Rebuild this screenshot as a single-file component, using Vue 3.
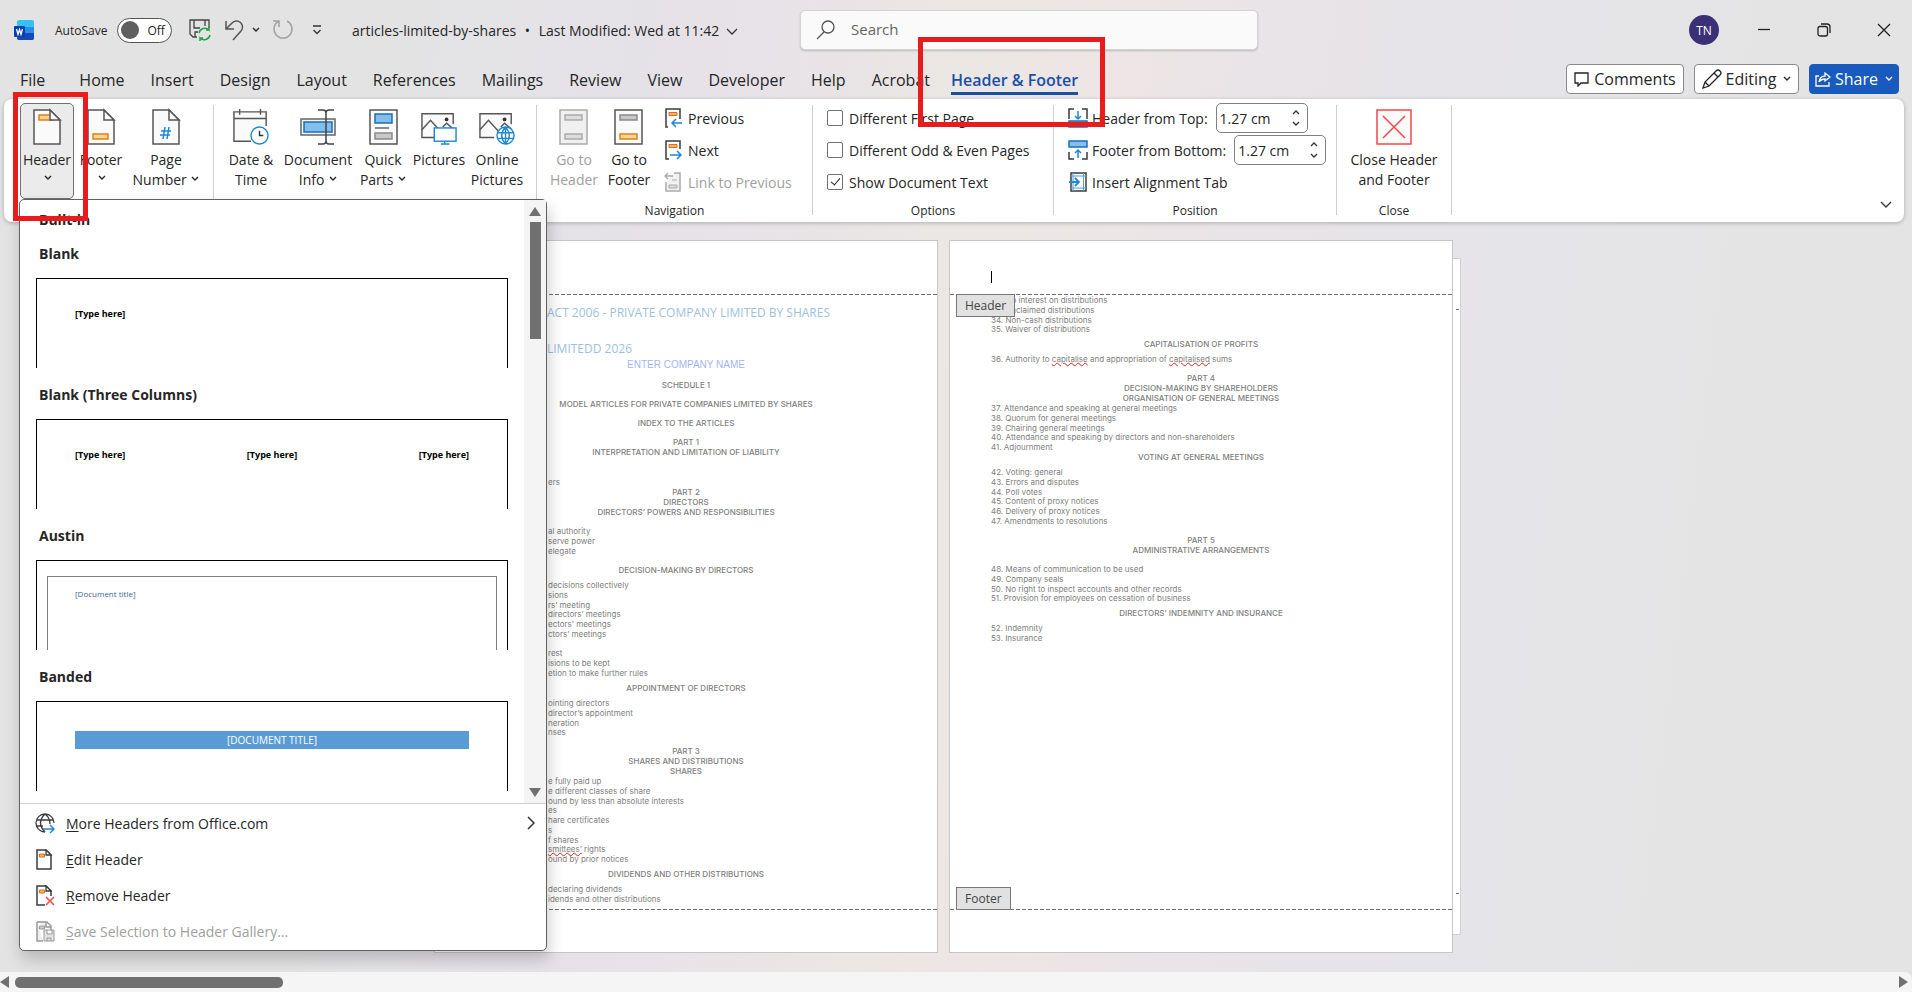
<template>
  <div class="word">
    <header class="title-bar">
      <Icon class="logo" name="word" />
      <label class="autosave">
        AutoSave
        <input v-model="autoSave" type="checkbox" class="sr-only" />
        <span class="toggle"><span class="knob"></span>Off</span>
      </label>
      <div class="quick-access">
        <button aria-label="Save"><Icon name="save" /></button>
        <button class="undo" aria-label="Undo"><Icon name="undo" /><Icon name="chevron" /></button>
        <button aria-label="Redo"><Icon name="redo" /></button>
        <button class="customize" aria-label="Customize"><Icon name="customize" /></button>
      </div>
      <button class="doc-name">
        articles-limited-by-shares <span class="dot">•</span> Last Modified: Wed at 11:42
        <Icon name="chevronBig" />
      </button>
      <label class="search">
        <Icon name="search" />
        <input type="search" placeholder="Search" aria-label="Search" />
      </label>
      <div class="window-controls">
        <button class="avatar">TN</button>
        <button aria-label="Minimize"><Icon name="minimize" /></button>
        <button aria-label="Restore"><Icon name="restore" /></button>
        <button aria-label="Close"><Icon name="close" /></button>
      </div>
    </header>

    <nav class="tabs">
      <button v-for="tab in tabs" :key="tab" class="tab">{{ tab }}</button>
      <button class="tab active">Header &amp; Footer<span class="highlight highlight-tab"></span></button>
      <div class="actions">
        <button class="action"><Icon name="comment" />Comments</button>
        <button class="action editing"><Icon name="pencil" />Editing<Icon name="chevron" /></button>
        <button class="action share"><Icon name="share" />Share<Icon name="chevron" /></button>
      </div>
    </nav>

    <section class="ribbon">
      <div class="group group-insert">
        <div class="tools">
          <div class="header-tool">
            <button class="tool pressed">
              <Icon name="header" />
              <span>Header</span>
              <span class="drop"><Icon name="chevron" /></span>
            </button>
            <div class="menu">
              <div class="gallery">
                <div class="gallery-list">
                  <h2>Built-in</h2>
                  <template v-for="item in gallery" :key="item.name">
                    <h3>{{ item.name }}</h3>
                    <button class="preview" :class="item.kind">
                      <span class="preview-inner">
                        <span v-for="(text, i) in item.texts" :key="i">{{ text }}</span>
                      </span>
                    </button>
                  </template>
                </div>
                <div class="scroll-y">
                  <Icon name="arrowUp" />
                  <span class="thumb-y"></span>
                  <Icon name="arrowDown" />
                </div>
              </div>
              <ul class="menu-items">
                <li v-for="item in menuItems" :key="item.icon">
                  <button :disabled="item.disabled">
                    <Icon :name="item.icon" />
                    <span><u>{{ item.key }}</u>{{ item.label }}</span>
                    <Icon v-if="item.more" class="more" name="chevronRight" />
                  </button>
                </li>
              </ul>
            </div>
            <span class="highlight highlight-header"></span>
          </div>
          <button class="tool w-54">
            <Icon name="footer" />
            <span>Footer</span>
            <span class="drop"><Icon name="chevron" /></span>
          </button>
          <button class="tool w-76">
            <Icon name="pageNumber" />
            <span>Page</span>
            <span>Number <Icon name="chevron" /></span>
          </button>
        </div>
      </div>
      <i class="sep"></i>

      <div class="group group-content">
        <div class="tools">
          <button class="tool w-60"><Icon name="date" /><span>Date &amp;</span><span>Time</span></button>
          <button class="tool w-74">
            <Icon name="docInfo" />
            <span>Document</span>
            <span>Info <Icon name="chevron" /></span>
          </button>
          <button class="tool w-56">
            <Icon name="quickParts" />
            <span>Quick</span>
            <span>Parts <Icon name="chevron" /></span>
          </button>
          <button class="tool w-56"><Icon name="pictures" /><span>Pictures</span></button>
          <button class="tool w-60"><Icon name="onlinePictures" /><span>Online</span><span>Pictures</span></button>
        </div>
      </div>
      <i class="sep"></i>

      <div class="group group-navigation">
        <div class="tools">
          <button class="tool w-56" disabled><Icon name="goHeader" /><span>Go to</span><span>Header</span></button>
          <button class="tool w-54"><Icon name="goFooter" /><span>Go to</span><span>Footer</span></button>
          <div class="rows">
            <button class="row"><Icon name="previous" />Previous</button>
            <button class="row"><Icon name="next" />Next</button>
            <button class="row" disabled><Icon name="link" />Link to Previous</button>
          </div>
        </div>
        <p class="caption">Navigation</p>
      </div>
      <i class="sep"></i>

      <div class="group group-options">
        <div class="rows">
          <label v-for="option in options" :key="option.label" class="row">
            <input v-model="option.checked" type="checkbox" />{{ option.label }}
          </label>
        </div>
        <p class="caption">Options</p>
      </div>
      <i class="sep"></i>

      <div class="group group-position">
        <div class="rows">
          <div v-for="field in distances" :key="field.id" class="row">
            <Icon :name="field.icon" />
            <label :for="field.id">{{ field.label }}</label>
            <span class="spin">
              <input :id="field.id" v-model="field.value" type="text" />
              <span class="spin-buttons">
                <button aria-label="Increase"><Icon name="spinUp" /></button>
                <button aria-label="Decrease"><Icon name="spinDown" /></button>
              </span>
            </span>
          </div>
          <button class="row"><Icon name="alignTab" />Insert Alignment Tab</button>
        </div>
        <p class="caption">Position</p>
      </div>
      <i class="sep"></i>

      <div class="group group-close">
        <button class="tool"><Icon name="closeHeader" /><span>Close Header</span><span>and Footer</span></button>
        <p class="caption">Close</p>
      </div>
      <i class="sep"></i>
      <button class="collapse" aria-label="Collapse ribbon"><Icon name="chevronBig" /></button>
    </section>

    <main class="workspace">
      <article class="page">
        <div class="page-header"></div>
        <div class="page-body">
          <div class="big-title">
            <p>ACT 2006 - PRIVATE COMPANY LIMITED BY SHARES</p>
            <p>LIMITEDD 2026</p>
          </div>
          <p class="company">ENTER COMPANY NAME</p>
          <div v-for="(block, i) in pageOne" :key="i" class="block" :class="[block.kind, block.gap]">
            <p v-for="(line, j) in block.lines" :key="j" v-html="line"></p>
          </div>
        </div>
        <div class="page-footer"></div>
      </article>
      <div class="page-stack">
        <div class="page-behind"></div>
        <article class="page second">
          <div class="page-header">
            <span class="caret"></span>
            <span class="tag tag-header">Header</span>
          </div>
          <div class="page-body">
            <div v-for="(block, i) in pageTwo" :key="i" class="block" :class="[block.kind, block.gap]">
              <p v-for="(line, j) in block.lines" :key="j" v-html="line"></p>
            </div>
          </div>
          <div class="page-footer"><span class="tag tag-footer">Footer</span></div>
        </article>
      </div>
    </main>

    <div class="scroll-x">
      <Icon name="arrowLeft" />
      <span class="thumb-x"></span>
      <Icon class="arrow-right" name="arrowRight" />
    </div>
  </div>
</template>

<script setup>
import { h, ref } from 'vue'

const doc = '<path d="M5 1h16l10 10v24H5z" fill="#fafafa" stroke="#555" stroke-width="1.5"/>'
const fold = '<path d="M21 1v10h10z" fill="#fff" stroke="#555" stroke-width="1.5"/>'
const orange = 'fill="#fbd58c" stroke="#e07f1c" stroke-width="1.5"'
const blue = 'fill="#83beec" stroke="#1a6fb8" stroke-width="1.5"'
const gray = 'fill="#c8c8c8" stroke="#8a8a8a" stroke-width="1.5"'
const picture = '<path d="M34 16V5H1v25h15" fill="#fafafa" stroke="#555" stroke-width="1.5"/><path d="M1 22l9-10 11 12M23 19l4-4 7 6" fill="none" stroke="#555" stroke-width="1.5"/><circle cx="27" cy="11" r="2" fill="#333"/>'
const smallDoc = '<path d="M2 1h9l5 5v14H2z" fill="#fff" stroke="#3b3b3b" stroke-width="1.5"/><path d="M4.500 5h5v3h-5z" fill="#f9b269" stroke="#d8701a"/><path d="M11 1v5h5z" fill="#fff" stroke="#3b3b3b" stroke-width="1.300"/>'

// name: [width, height, markup]
const icons = {
  word: [20, 20, '<rect x="3" width="17" height="20" rx="2" fill="#35c1f1"/><path d="M3 7h17v6H3z" fill="#2b8ceb"/><path d="M3 13h17v5a2 2 0 0 1-2 2H5a2 2 0 0 1-2-2z" fill="#1548b8"/><rect y="6" width="11" height="11" rx="1" fill="#0a3ea8"/><path d="M2.500 9l1.500 5.500 1.500-5 1.500 5L8.500 9" fill="none" stroke="#fff" stroke-width="1.300"/>'],
  save: [22, 22, '<path d="M8 18H4L1 15V1h19v8" fill="none" stroke="#444" stroke-width="1.300"/><path d="M5 1v8h6M16 1v6M6 18v-5h3" fill="none" stroke="#444" stroke-width="1.300"/><path d="M10 14a6 6 0 0 1 10-3v-3m0 3h-3M21 16a6 6 0 0 1-10 3v3m0-3h3" fill="none" stroke="#28a14a" stroke-width="1.500"/>'],
  undo: [20, 22, '<path d="M2 2v8h8M2 10l6-6a6 6 0 0 1 9 8l-8 9" fill="none" stroke="#555" stroke-width="1.500"/>'],
  redo: [22, 22, '<path d="M1 2h6v6M7 2a9 9 0 1 0 8 0" fill="none" stroke="#a3a3a3" stroke-width="1.500"/>'],
  customize: [10, 10, '<path d="M1 1h8M1.500 5L5 8.500 8.500 5" fill="none" stroke="#333" stroke-width="1.300"/>'],
  chevron: [8, 6, '<path d="M1 1l3 3 3-3" fill="none" stroke="currentColor" stroke-width="1.400"/>'],
  chevronBig: [12, 8, '<path d="M1 1l5 5 5-5" fill="none" stroke="#333" stroke-width="1.300"/>'],
  chevronRight: [8, 14, '<path d="M1 1l6 6-6 6" fill="none" stroke="#333" stroke-width="1.500"/>'],
  search: [20, 20, '<circle cx="12" cy="7" r="6" fill="none" stroke="#555" stroke-width="1.300"/><path d="M8 12l-7 7" stroke="#555" stroke-width="1.300"/>'],
  minimize: [14, 14, '<path d="M1 6.500h12" stroke="#222" stroke-width="1.300"/>'],
  restore: [14, 14, '<rect x="1" y="3.500" width="9.500" height="9.500" rx="2" fill="none" stroke="#222" stroke-width="1.300"/><path d="M4 1h6a3 3 0 0 1 3 3v6" fill="none" stroke="#222" stroke-width="1.300"/>'],
  close: [14, 14, '<path d="M1 1l12 12M13 1L1 13" stroke="#222" stroke-width="1.300"/>'],
  comment: [16, 16, '<path d="M1 2h13v10H7l-3 3v-3H1z" fill="none" stroke="#222" stroke-width="1.300"/>'],
  pencil: [20, 20, '<path d="M1 19l2-6L14 2q2-2 4 0t0 4L7 17zM12 4l4 4M3 13l4 4" fill="none" stroke="#222" stroke-width="1.300"/>'],
  share: [16, 16, '<path d="M4 5H1v10h13v-4M4 11q1-6 6-6V2l5 4-5 4V8q-4 0-6 3z" fill="none" stroke="#fff" stroke-width="1.300"/>'],
  header: [36, 36, `${doc}<rect x="10" y="6" width="14" height="5" ${orange}/>${fold}`],
  footer: [36, 36, `${doc}${fold}<rect x="10" y="25" width="15" height="5" ${orange}/>`],
  pageNumber: [36, 36, `${doc}${fold}<path d="M17 18l-2 12M21 18l-2 12M13 22h10M12 26h10" fill="none" stroke="#1e88d2" stroke-width="1.500"/>`],
  date: [38, 38, '<path d="M35 18V3H1v31h18" fill="#fafafa" stroke="#555" stroke-width="1.500"/><path d="M1 10h34M7 0v6M29 0v6" stroke="#555" stroke-width="1.500"/><circle cx="28" cy="28" r="9" fill="#fff" stroke="#1e88d2" stroke-width="1.500"/><path d="M28 23v5h4" fill="none" stroke="#333" stroke-width="1.500"/>'],
  docInfo: [36, 36, `<rect x="1" y="10" width="34" height="16" fill="#f4f4f4" stroke="#666" stroke-width="1.500"/><rect x="4" y="13" width="28" height="10" ${blue}/><path d="M18 1h5q3 0 3 3v28q0 3-3 3h-5M34 1h-5q-3 0-3 3v28q0 3 3 3h5" fill="none" stroke="#444" stroke-width="1.500"/>`],
  quickParts: [36, 36, `<rect x="5" y="1" width="27" height="34" fill="#fafafa" stroke="#555" stroke-width="1.500"/><rect x="10" y="5" width="17" height="9" ${blue}/><path d="M10 19h14" stroke="#666" stroke-width="1.500"/><rect x="10" y="24" width="17" height="6" ${gray}/>`],
  pictures: [38, 38, `${picture}<rect x="14" y="20" width="23" height="14" fill="#fff" stroke="#1e88d2" stroke-width="1.500"/><path d="M25 34v3M21 37h9" stroke="#1e88d2" stroke-width="1.500"/>`],
  onlinePictures: [38, 38, `${picture}<circle cx="28" cy="28" r="9" fill="#fff"/><path d="M19 28a9 9 0 1 0 18 0 9 9 0 1 0-18 0M28 19v18M28 19q-8 9 0 18M28 19q8 9 0 18M20 25h16M20 31h16" fill="none" stroke="#1e88d2" stroke-width="1.500"/>`],
  goHeader: [36, 36, '<rect x="4" y="1" width="27" height="34" fill="#f0f0f0" stroke="#aaa" stroke-width="1.500"/><path d="M9 6h17v5H9zM9 25h17v5H9z" fill="#ddd" stroke="#aaa" stroke-width="1.500"/>'],
  goFooter: [36, 36, `<rect x="4" y="1" width="27" height="34" fill="#fafafa" stroke="#555" stroke-width="1.500"/><rect x="9" y="6" width="17" height="5" ${gray}/><rect x="9" y="25" width="17" height="5" ${orange}/>`],
  previous: [20, 20, '<path d="M4 19H2V1h14v10" fill="#fff" stroke="#3b3b3b" stroke-width="1.500"/><path d="M5 4.500h8v3H5z" fill="#f9b269" stroke="#d8701a"/><path d="M18 15H8m4-4l-4 4 4 4" fill="none" stroke="#1e88d2" stroke-width="1.500"/>'],
  next: [20, 20, '<path d="M5 19H2V1h14v8" fill="#fff" stroke="#3b3b3b" stroke-width="1.500"/><path d="M5 4.500h8v3H5z" fill="#f9b269" stroke="#d8701a"/><path d="M6 15h11m-4-4l4 4-4 4" fill="none" stroke="#1e88d2" stroke-width="1.500"/>'],
  link: [20, 20, '<path d="M10 1h6v18H2v-9" fill="#f2f2f2" stroke="#aaa" stroke-width="1.500"/><path d="M5 13h8v3H5zM8 8h5" fill="#ddd" stroke="#aaa"/><path d="M9 4H1m3-3L1 4l3 3" fill="none" stroke="#aaa" stroke-width="1.300"/>'],
  fromTop: [20, 20, `<path d="M1 11V1h5M14 1h5v10" fill="none" stroke="#3b3b3b" stroke-width="1.500"/><path d="M10 3v8m-3-3l3 3 3-3" fill="none" stroke="#1e88d2" stroke-width="1.500"/><rect x="1" y="13" width="18" height="6" ${blue}/>`],
  fromBottom: [20, 20, `<path d="M1 12v7h5M14 19h5v-7" fill="none" stroke="#3b3b3b" stroke-width="1.500"/><path d="M10 18v-8m-3 3l3-3 3 3" fill="none" stroke="#1e88d2" stroke-width="1.500"/><rect x="1" y="1" width="18" height="6" ${blue}/>`],
  alignTab: [20, 20, '<rect x="3" y="1" width="15" height="18" fill="#fff" stroke="#3b3b3b" stroke-width="1.500"/><path d="M5 1v18M15.500 1v18M3 4h15M3 16h15" stroke="#4aa0dc"/><path d="M1 10h10m-4-4l4 4-4 4" fill="none" stroke="#1e88d2" stroke-width="1.800"/>'],
  spinUp: [8, 6, '<path d="M1 5l3-3 3 3" fill="none" stroke="#333" stroke-width="1.300"/>'],
  spinDown: [8, 6, '<path d="M1 1l3 3 3-3" fill="none" stroke="#333" stroke-width="1.300"/>'],
  closeHeader: [36, 36, '<rect x="1" y="1" width="34" height="34" fill="#fafafa" stroke="#f04848" stroke-width="1.500"/><path d="M7 7l22 22M29 7L7 29" stroke="#f04848" stroke-width="1.500"/>'],
  office: [20, 21, '<path d="M19 10A9 9 0 1 0 10 19M10 1q-9 9 0 18M10 1q5 4 5 10M2 7h16M2 13h6" fill="none" stroke="#3b3b3b" stroke-width="1.300"/><path d="M8 16h11m-4-4l4 4-4 4" fill="none" stroke="#1e88d2" stroke-width="1.500"/>'],
  edit: [20, 21, smallDoc],
  remove: [20, 21, `${smallDoc}<path d="M10 11h10v10H10z" fill="#fff"/><path d="M11 12l8 8M19 12l-8 8" stroke="#f04848" stroke-width="1.500"/>`],
  saveSelection: [20, 21, '<path d="M2 1h10l4 4v4M2 1v19h6M11 1v5h5" fill="#eee" stroke="#999" stroke-width="1.500"/><path d="M4.500 5h5v3h-5z" fill="#ccc" stroke="#999"/><path d="M9 9h10v11H9zM12 9v4h5V9M12 20v-3h4v3" fill="#e4e4e4" stroke="#999"/>'],
  arrowUp: [12, 10, '<path d="M6 0l6 9H0z" fill="#707070"/>'],
  arrowDown: [12, 10, '<path d="M6 10L0 1h12z" fill="#707070"/>'],
  arrowLeft: [10, 12, '<path d="M0 6l9-6v12z" fill="#707070"/>'],
  arrowRight: [10, 12, '<path d="M10 6L1 0v12z" fill="#707070"/>']
}

const Icon = ({ name }) => {
  const [width, height, markup] = icons[name]
  return h('svg', {
    width,
    height,
    viewBox: `0 0 ${width} ${height}`,
    'aria-hidden': 'true',
    innerHTML: markup
  })
}

const autoSave = ref(false)

const tabs = ['File', 'Home', 'Insert', 'Design', 'Layout', 'References', 'Mailings', 'Review', 'View', 'Developer', 'Help', 'Acrobat']

const gallery = [
  { name: 'Blank', kind: 'blank', texts: ['[Type here]'] },
  { name: 'Blank (Three Columns)', kind: 'columns', texts: ['[Type here]', '[Type here]', '[Type here]'] },
  { name: 'Austin', kind: 'austin', texts: ['[Document title]'] },
  { name: 'Banded', kind: 'banded', texts: ['[DOCUMENT TITLE]'] }
]

const menuItems = [
  { icon: 'office', key: 'M', label: 'ore Headers from Office.com', more: true },
  { icon: 'edit', key: 'E', label: 'dit Header' },
  { icon: 'remove', key: 'R', label: 'emove Header' },
  { icon: 'saveSelection', key: 'S', label: 'ave Selection to Header Gallery...', disabled: true }
]

const options = ref([
  { label: 'Different First Page', checked: false },
  { label: 'Different Odd & Even Pages', checked: false },
  { label: 'Show Document Text', checked: true }
])

const distances = ref([
  { id: 'from-top', icon: 'fromTop', label: 'Header from Top:', value: '1.27 cm' },
  { id: 'from-bottom', icon: 'fromBottom', label: 'Footer from Bottom:', value: '1.27 cm' }
])

const pageOne = [
  { kind: 'heading', gap: 'gap-md', lines: ['SCHEDULE 1'] },
  { kind: 'heading', gap: 'gap-md', lines: ['MODEL ARTICLES FOR PRIVATE COMPANIES LIMITED BY SHARES'] },
  { kind: 'heading', gap: 'gap-md', lines: ['INDEX TO THE ARTICLES'] },
  { kind: 'heading', gap: 'gap-md', lines: ['PART 1', 'INTERPRETATION AND LIMITATION OF LIABILITY'] },
  { kind: 'list', gap: 'gap-lg', lines: ['ers'] },
  { kind: 'heading', lines: ['PART 2', 'DIRECTORS', 'DIRECTORS’ POWERS AND RESPONSIBILITIES'] },
  { kind: 'list', gap: 'gap-md', lines: ['al authority', 'serve power', 'elegate'] },
  { kind: 'heading', gap: 'gap-md', lines: ['DECISION-MAKING BY DIRECTORS'] },
  { kind: 'list', gap: 'gap-sm', lines: ['decisions collectively', 'sions', 'rs’ meeting', 'directors’ meetings', 'ectors’ meetings', 'ctors’ meetings'] },
  { kind: 'list', gap: 'gap-md', lines: ['rest', 'isions to be kept', 'etion to make further rules'] },
  { kind: 'heading', gap: 'gap-sm', lines: ['APPOINTMENT OF DIRECTORS'] },
  { kind: 'list', gap: 'gap-sm', lines: ['ointing directors', 'director’s appointment', 'neration', 'nses'] },
  { kind: 'heading', gap: 'gap-md', lines: ['PART 3', 'SHARES AND DISTRIBUTIONS', 'SHARES'] },
  { kind: 'list', lines: ['e fully paid up', 'e different classes of share', 'ound by less than absolute interests', 'es', 'hare certificates', 's', 'f shares', '<u class="typo">smittees’</u> rights', 'ound by prior notices'] },
  { kind: 'heading', gap: 'gap-sm', lines: ['DIVIDENDS AND OTHER DISTRIBUTIONS'] },
  { kind: 'list', gap: 'gap-sm', lines: ['declaring dividends', 'idends and other distributions'] }
]

const pageTwo = [
  { kind: 'list', lines: ['32. No interest on distributions', '33. Unclaimed distributions', '34. Non-cash distributions', '35. Waiver of distributions'] },
  { kind: 'heading', gap: 'gap-sm', lines: ['CAPITALISATION OF PROFITS'] },
  { kind: 'list', gap: 'gap-sm', lines: ['36. Authority to <u class="typo">capitalise</u> and appropriation of <u class="typo">capitalised</u> sums'] },
  { kind: 'heading', gap: 'gap-md', lines: ['PART 4', 'DECISION-MAKING BY SHAREHOLDERS', 'ORGANISATION OF GENERAL MEETINGS'] },
  { kind: 'list', lines: ['37. Attendance and speaking at general meetings', '38. Quorum for general meetings', '39. Chairing general meetings', '40. Attendance and speaking by directors and non-shareholders', '41. Adjournment'] },
  { kind: 'heading', lines: ['VOTING AT GENERAL MEETINGS'] },
  { kind: 'list', gap: 'gap-sm', lines: ['42. Voting: general', '43. Errors and disputes', '44. Poll votes', '45. Content of proxy notices', '46. Delivery of proxy notices', '47. Amendments to resolutions'] },
  { kind: 'heading', gap: 'gap-md', lines: ['PART 5', 'ADMINISTRATIVE ARRANGEMENTS'] },
  { kind: 'list', gap: 'gap-md', lines: ['48. Means of communication to be used', '49. Company seals', '50. No right to inspect accounts and other records', '51. Provision for employees on cessation of business'] },
  { kind: 'heading', gap: 'gap-sm', lines: ['DIRECTORS’ INDEMNITY AND INSURANCE'] },
  { kind: 'list', gap: 'gap-sm', lines: ['52. Indemnity', '53. Insurance'] }
]
</script>

<style>
body {
  margin: 0;
}
</style>

<style scoped>
* {
  box-sizing: border-box;
}

.word {
  display: flex;
  flex-direction: column;
  min-height: 100vh;
  font-family: "Open Sans", "Noto Sans", sans-serif;
  font-size: 14px;
  color: #262626;
  background: linear-gradient(97deg, #e3e3e3 0%, #e3e3e4 20%, #e6e2e8 36%, #ebe7e4 48%, #eee5e5 54%, #e8e4e8 64%, #e5e4e8 76%, #e4e4e4 90%);
}

button {
  padding: 0;
  border: 0;
  background: none;
  color: inherit;
  font: inherit;
  white-space: nowrap;
}

svg {
  flex: none;
}

p,
h2,
h3,
ul {
  margin: 0;
  padding: 0;
}

.sr-only {
  position: absolute;
  width: 1px;
  height: 1px;
  margin: 0;
  opacity: 0;
}

/* title bar */
.title-bar {
  display: flex;
  align-items: center;
  height: 60px;
  padding: 0 21px 0 14px;
}

.autosave {
  display: flex;
  align-items: center;
  gap: 10px;
  width: 134px;
  margin-left: 21px;
  font-size: 12px;
  white-space: nowrap;
}

.toggle {
  display: flex;
  align-items: center;
  gap: 8px;
  width: 55px;
  height: 25px;
  padding-left: 3px;
  border: 1px solid #555;
  border-radius: 13px;
  background: #fff;
}

.knob {
  width: 18px;
  height: 18px;
  border-radius: 50%;
  background: #5f5f5f;
}

.quick-access {
  display: flex;
  align-items: center;
  width: 163px;
}

.quick-access button {
  display: flex;
  align-items: center;
}

.quick-access .undo {
  gap: 8px;
  margin: 0 12px 0 13px;
}

.quick-access .customize {
  margin-left: 18px;
}

.doc-name {
  width: 448px;
  text-align: left;
}

.doc-name svg {
  margin-left: 3px;
}

.dot {
  margin: 0 5px;
}

.search {
  display: flex;
  align-items: center;
  gap: 15px;
  flex: 0 1 458px;
  height: 40px;
  padding-left: 15px;
  border: 1px solid #d4d4d4;
  border-radius: 5px;
  background: #fafafa;
  box-shadow: 0 1px 2px rgba(0, 0, 0, 0.2);
}

.search input {
  flex: 1;
  min-width: 0;
  padding: 0 0 2px;
  border: 0;
  outline: 0;
  background: none;
  font: inherit;
  font-size: 15px;
}

.search input::placeholder {
  color: #666;
  opacity: 1;
}

.window-controls {
  display: flex;
  align-items: center;
  gap: 46px;
  margin-left: auto;
}

.window-controls button {
  display: flex;
}

.window-controls .avatar {
  align-items: center;
  justify-content: center;
  width: 30px;
  height: 30px;
  margin-right: -8px;
  border-radius: 50%;
  background: #3b3078;
  color: #fff;
  font-size: 12px;
}

/* tabs */
.tabs {
  display: flex;
  align-items: flex-start;
  height: 39px;
  padding: 4px 13px 0 7px;
}

.tab {
  position: relative;
  margin: 4px 13px 0;
  border-bottom: 3px solid transparent;
  font-size: 16px;
  line-height: 24px;
}

.tab:first-child {
  margin-right: 21px;
}

.tab.active {
  margin-left: 8px;
  border-color: #1850a8;
  color: #1850a8;
  font-weight: 600;
}

.highlight {
  position: absolute;
  z-index: 5;
  border: 5px solid #e81c1c;
  pointer-events: none;
}

.highlight-tab {
  top: -31px;
  left: -33px;
  width: 187px;
  height: 90px;
}

.highlight-header {
  top: -11px;
  left: -7px;
  width: 75px;
  height: 129px;
}

.actions {
  display: flex;
  gap: 10px;
  margin-left: auto;
}

.action {
  display: flex;
  align-items: center;
  justify-content: center;
  gap: 4px;
  width: 118px;
  height: 30px;
  border: 1px solid #8a8a8a;
  border-radius: 4px;
  background: #fff;
  font-size: 16px;
}

.action.editing {
  width: 105px;
}

.action.share {
  width: 90px;
  border-color: #185abd;
  background: #185abd;
  color: #fff;
}

.action svg:last-child:not(:first-child) {
  margin-left: 3px;
}

/* ribbon */
.ribbon {
  display: flex;
  margin: 0 8px 0 4px;
  padding-top: 4px;
  border-radius: 8px;
  background: #fff;
  box-shadow: 0 1px 4px rgba(0, 0, 0, 0.25);
}

.group {
  display: flex;
  flex-direction: column;
  height: 119px;
}

.group-insert {
  width: 209px;
  padding-left: 16px;
}

.group-content {
  width: 322px;
  padding-left: 7px;
}

.group-navigation {
  width: 275px;
}

.group-navigation .tools {
  padding-left: 9px;
}

.group-options {
  width: 240px;
}

.group-options .rows {
  padding-left: 14px;
}

.group-position {
  width: 282px;
}

.group-position .rows {
  padding-left: 14px;
}

.group-close {
  width: 114px;
}

.sep {
  width: 1px;
  margin: 2px 0 7px;
  background: #cfcfcf;
}

.tools {
  display: flex;
}

.caption {
  margin-top: 3px;
  font-size: 12px;
  line-height: 18px;
  text-align: center;
}

.tool {
  display: flex;
  flex-direction: column;
  align-items: center;
  height: 96px;
  padding-top: 6px;
  line-height: 20px;
}

.tool > svg {
  height: 36px;
  margin-bottom: 5px;
  overflow: visible;
}

.tool span svg {
  margin: 0 0 3px 1px;
}

.tool .drop {
  line-height: 18px;
}

.tool:disabled,
.row:disabled {
  color: #a0a0a0;
}

.tool.pressed {
  width: 54px;
  border: 1px solid #707070;
  border-radius: 5px;
  padding-top: 5px;
  background: #ebebeb;
}

.header-tool {
  position: relative;
}

.w-54 {
  width: 54px;
}

.w-56 {
  width: 56px;
}

.w-60 {
  width: 60px;
}

.w-74 {
  width: 74px;
}

.w-76 {
  width: 76px;
}

.rows {
  display: flex;
  flex-direction: column;
  height: 96px;
  margin-top: -1px;
}

.rows + .caption {
  margin-top: 4px;
}

.tools .rows {
  padding-left: 8px;
}

.row {
  display: flex;
  align-items: center;
  gap: 4px;
  height: 32px;
  white-space: nowrap;
}

.row input[type="checkbox"] {
  appearance: none;
  display: grid;
  place-items: center;
  width: 16px;
  height: 16px;
  margin: 0 2px 0 0;
  border: 1px solid #707070;
  border-radius: 2px;
  background: #fff;
}

.row input[type="checkbox"]:checked::after {
  content: "";
  width: 4px;
  height: 8px;
  margin-bottom: 3px;
  border: solid #222;
  border-width: 0 1px 1px 0;
  transform: rotate(40deg);
}

.spin {
  display: flex;
  width: 92px;
  height: 30px;
  margin-left: 4px;
  border: 1px solid #808080;
  border-radius: 5px;
  background: #fff;
}

.spin input {
  flex: 1;
  min-width: 0;
  padding: 0 0 0 3px;
  border: 0;
  outline: 0;
  background: none;
  color: inherit;
  font: inherit;
}

.spin-buttons {
  display: flex;
  flex-direction: column;
  justify-content: space-evenly;
  width: 22px;
}

.spin-buttons button {
  display: flex;
  justify-content: center;
}

.collapse {
  align-self: flex-end;
  height: 32px;
  margin: 0 12px 3px auto;
}

/* header gallery menu */
.menu {
  position: absolute;
  z-index: 4;
  top: 96px;
  left: -1px;
  width: 528px;
  border: 1px solid #5f6163;
  border-radius: 5px;
  background: #fff;
  box-shadow: 2px 8px 16px rgba(0, 0, 0, 0.2);
}

.gallery {
  display: flex;
  height: 604px;
  border-bottom: 1px solid #cfcfcf;
}

.gallery-list {
  flex: 1;
  padding: 3px 16px 12px;
}

.gallery h2,
.gallery h3 {
  padding-left: 3px;
  font-size: 14px;
  font-weight: 700;
  line-height: 34px;
}

.preview {
  display: block;
  width: 100%;
  height: 90px;
  margin: 7px 0 10px;
  border: 1px solid #000;
  border-bottom: 0;
  font-size: 9px;
  font-weight: 700;
  color: #000;
}

.preview-inner {
  display: flex;
  justify-content: space-between;
  height: 100%;
  padding: 28px 38px 0;
}

.austin {
  padding: 15px 10px 0;
}

.austin .preview-inner {
  padding: 11px 27px 0;
  border: 1px solid #808080;
  border-bottom: 0;
  color: #3a6a9c;
  font-size: 8px;
  font-weight: 500;
}

.banded {
  padding: 29px 38px 0;
}

.banded .preview-inner {
  justify-content: center;
  align-items: center;
  height: 18px;
  margin-bottom: 42px;
  padding: 0;
  background: #5b9bd5;
  color: #fff;
  font-size: 10px;
  font-weight: 400;
}

.scroll-y {
  display: flex;
  flex-direction: column;
  align-items: center;
  width: 22px;
  padding: 7px 0 6px;
  background: #f4f4f4;
}

.thumb-y {
  width: 11px;
  height: 117px;
  margin: 5px 0 auto;
  background: #707070;
}

.menu-items {
  padding: 1px 0;
  list-style: none;
}

.menu-items button {
  display: flex;
  align-items: center;
  gap: 11px;
  width: 100%;
  height: 36px;
  padding: 0 11px 0 15px;
}

.menu-items button:disabled {
  color: #a0a0a0;
}

.menu-items u {
  text-underline-offset: 2px;
}

.more {
  margin-left: auto;
}

/* document */
.workspace {
  display: flex;
  flex: 1;
  align-items: flex-start;
  justify-content: center;
  gap: 11px;
  padding: 18px 25px 19px 0;
}

.page {
  position: relative;
  display: flex;
  flex-direction: column;
  width: 504px;
  height: 713px;
  border: 1px solid #c6c6c6;
  background: #fff;
  color: #808080;
  font-family: Inter, "Liberation Sans", sans-serif;
  font-size: 8px;
  line-height: 10px;
}

.page-stack {
  position: relative;
}

.page-behind {
  position: absolute;
  top: 18px;
  right: -8px;
  width: 100px;
  height: 677px;
  border: 1px solid #d0d0d0;
  background: #fff;
}

/* dashes of the next page that peek out on the right */
.page-behind::before,
.page-behind::after {
  content: "";
  position: absolute;
  top: 50px;
  right: 1px;
  width: 3px;
  height: 1px;
  background: #707070;
}

.page-behind::after {
  top: 634px;
}

.page-header,
.page-footer {
  position: relative;
  flex: none;
  height: 54px;
  background: repeating-linear-gradient(90deg, #707070 0 4px, transparent 4px 6px) bottom / 100% 1px no-repeat;
}

.page-footer {
  height: 43px;
  background-position: top;
}

.page-body {
  flex: 1;
  overflow: hidden;
}

.big-title {
  padding: 8px 0 0 112px;
  color: #9dbfdf;
  font-family: "Open Sans", sans-serif;
  font-size: 12px;
  line-height: 20px;
}

.big-title p + p {
  margin-top: 16px;
}

.company {
  color: #a3b5fb;
  font-family: "Liberation Sans", sans-serif;
  font-size: 10px;
  line-height: 12px;
  text-align: center;
}

.heading {
  font-weight: 500;
  text-align: center;
}

.list {
  padding-left: 113px;
}

.second .list {
  padding-left: 41px;
}

.list p:nth-child(4n) {
  line-height: 9px;
}

.list :deep(.typo) {
  text-decoration: underline wavy #e81c1c 1px;
  text-underline-offset: 0;
}

.gap-sm {
  margin-top: 5px;
}

.gap-md {
  margin-top: 9px;
}

.gap-lg {
  margin-top: 20px;
}

.caret {
  position: absolute;
  top: 30px;
  left: 41px;
  width: 1px;
  height: 12px;
  background: #000;
}

.tag {
  position: absolute;
  z-index: 1;
  left: 6px;
  height: 23px;
  padding: 0 8px;
  border: 1px solid #777;
  background: #e1e1e1;
  color: #444;
  font-family: "Open Sans", sans-serif;
  font-size: 12px;
  line-height: 21px;
}

.tag-header {
  top: 53px;
}

.tag-footer {
  bottom: 42px;
}

/* horizontal scrollbar */
.scroll-x {
  display: flex;
  align-items: center;
  height: 20px;
  border-radius: 0 8px 0 0;
  background: #f5f5f5;
}

.thumb-x {
  width: 268px;
  height: 11px;
  margin-left: 5px;
  border-radius: 5px;
  background: #707070;
}

.arrow-right {
  margin: 0 4px 0 auto;
}
</style>
